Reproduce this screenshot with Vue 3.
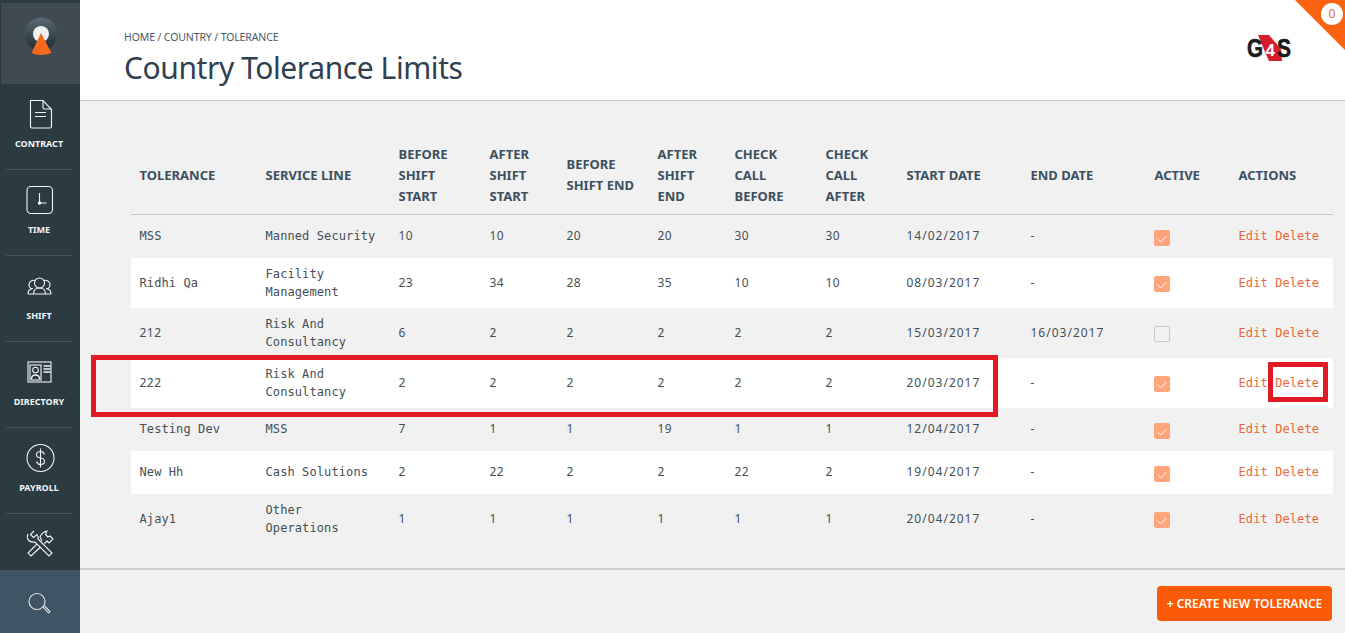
<template>
  <div class="page">
    <aside class="sidebar">
      <div class="logo-tile">
        <svg width="36" height="40" viewBox="0 0 36 40">
          <defs>
            <linearGradient id="ball" x1="0" y1="0" x2="0" y2="1">
              <stop offset="0" stop-color="#5b6a73" />
              <stop offset="1" stop-color="#1d2b33" />
            </linearGradient>
          </defs>
          <circle cx="18" cy="17" r="16.500" fill="url(#ball)" />
          <circle cx="18" cy="17" r="8" fill="#eef0f1" />
          <path d="M18 16 L28.500 36 Q18 40 8.500 36 Z" fill="#f4691c" />
        </svg>
      </div>
      <a v-for="item in navItems" :key="item.label" class="nav-item">
        <svg width="32" height="32" viewBox="0 0 32 32" fill="none" stroke="#f2f4f5" stroke-width="1.1">
          <template v-if="item.icon === 'contract'">
            <path d="M6.500 2.500h12.500l8.500 9v17q0 1.500-1.500 1.500h-18q-1.500 0-1.500-1.500z" />
            <path d="M19 2.500v7q0 1.500 1.500 1.500h7M11 14.500h11M11 18.500h11" />
          </template>
          <template v-if="item.icon === 'time'">
            <rect x="3" y="2.500" width="25.500" height="27" rx="4" />
            <path d="M15.500 9v10h7" />
            <circle cx="15.500" cy="19" r="1.200" fill="#f2f4f5" />
          </template>
          <template v-if="item.icon === 'shift'">
            <circle cx="15.500" cy="13" r="5" />
            <path d="M11 10.500a4.500 4.500 0 1 0-3 8.500M20 10.500a4.500 4.500 0 1 1 3 8.500" />
            <path d="M4 24q0-5 5-5.500M27 24q0-5-5-5.500M9.500 24q0-6 6-6t6 6M4 24h23" />
          </template>
          <template v-if="item.icon === 'directory'">
            <rect x="4" y="6" width="23" height="20" />
            <rect x="6" y="9" width="11" height="15" />
            <circle cx="11.500" cy="14" r="2.800" />
            <path d="M7.500 23q0-4 4-4t4 4M19.500 10h7M19.500 13h7M19.500 16h7" stroke-width="1.3" />
          </template>
          <template v-if="item.icon === 'payroll'">
            <circle cx="16.500" cy="16" r="13.500" />
            <path d="M20.500 12.500q-1-3-4-3-4 0-4 3t4 3.500 4 3.500-4 3q-3 0-4-3M16.500 6.500v19" />
          </template>
          <template v-if="item.icon === 'tools'">
            <path d="M10 3L6.500 6.500 9.500 9.500 13 6.500Q14.500 9 14 11L28 25 25 28 11 14Q5 15 3.500 10 3 8 4 6" />
            <path d="M13 16L4 25 7 28 16.500 19M18 13L16 9Q18 4 23 3 21 6 22 7L24 9 26 8 29 11 25 15 23 13 20.500 15.500" />
          </template>
        </svg>
        <span v-if="item.label" class="nav-label">{{ item.label }}</span>
      </a>
      <div class="search-tile">
        <svg width="24" height="24" viewBox="0 0 24 24" fill="none" stroke="#dfe5e8" stroke-width="1.100">
          <circle cx="9" cy="11.500" r="8" />
          <path d="M15 17l5.500 6 1.500-1.500-5.500-5.500" />
        </svg>
      </div>
    </aside>

    <main class="main">
      <header class="topbar">
        <div>
          <div class="crumbs">HOME / COUNTRY / TOLERANCE</div>
          <h1 class="title">Country Tolerance Limits</h1>
        </div>
        <div class="brand">
          <svg width="52" height="38" viewBox="0 -6 52 38">
            <path d="M13 0h11l12 14 1 12h-13l-4-9z" fill="#d71f2b" />
            <text x="2" y="22" class="brand-letter" textLength="16" lengthAdjust="spacingAndGlyphs">G</text>
            <text x="32" y="22" class="brand-letter" textLength="14" lengthAdjust="spacingAndGlyphs">S</text>
            <text x="20.500" y="21" class="brand-four">4</text>
          </svg>
        </div>
        <div class="ribbon"></div>
        <div class="badge">0</div>
      </header>

      <section class="content">
        <table class="grid">
          <colgroup>
            <col v-for="w in colWidths" :key="w.id" :style="{ width: w.size + 'px' }" />
          </colgroup>
          <thead>
            <tr>
              <th v-for="h in headings" :key="h.id">
                <span v-for="line in h.lines" :key="line" class="th-line">{{ line }}</span>
              </th>
            </tr>
          </thead>
          <tbody>
            <tr v-for="(row, i) in rows" :key="row.name" :class="{ white: i % 2 === 1, single: row.line.length < 15 }">
              <td :class="{ num: /^\d+$/.test(row.name) }">{{ row.name }}</td>
              <td><span class="wrap">{{ row.line }}</span></td>
              <td v-for="(n, j) in row.nums" :key="j" class="num">{{ n }}</td>
              <td class="date">{{ row.start }}</td>
              <td class="date">{{ row.end }}</td>
              <td>
                <span class="check" :class="{ on: row.active }">
                  <svg v-if="row.active" width="16" height="16" viewBox="0 0 16 16" fill="none" stroke="#fff" stroke-width="0.900">
                    <path d="M3.500 8.500l3 3.500 6-6" />
                  </svg>
                </span>
              </td>
              <td class="links"><a>Edit</a> <a>Delete</a></td>
            </tr>
          </tbody>
        </table>
        <div class="mark mark-row"></div>
        <div class="mark mark-delete"></div>
      </section>

      <footer class="footer">
        <button class="create">+ CREATE NEW TOLERANCE</button>
      </footer>
    </main>
  </div>
</template>

<script setup>
const navItems = [
  { icon: 'contract', label: 'CONTRACT' },
  { icon: 'time', label: 'TIME' },
  { icon: 'shift', label: 'SHIFT' },
  { icon: 'directory', label: 'DIRECTORY' },
  { icon: 'payroll', label: 'PAYROLL' },
  { icon: 'tools', label: '' },
]

const colWidths = [126, 133, 91, 77, 91, 77, 91, 81, 124, 124, 84, 103].map((size, id) => ({ id, size }))

const headings = [
  ['TOLERANCE'],
  ['SERVICE LINE'],
  ['BEFORE', 'SHIFT', 'START'],
  ['AFTER', 'SHIFT', 'START'],
  ['BEFORE', 'SHIFT END'],
  ['AFTER', 'SHIFT', 'END'],
  ['CHECK', 'CALL', 'BEFORE'],
  ['CHECK', 'CALL', 'AFTER'],
  ['START DATE'],
  ['END DATE'],
  ['ACTIVE'],
  ['ACTIONS'],
].map((lines, id) => ({ id, lines }))

const rows = [
  { name: 'MSS', line: 'Manned Security', nums: [10, 10, 20, 20, 30, 30], start: '14/02/2017', end: '-', active: true },
  { name: 'Ridhi Qa', line: 'Facility Management', nums: [23, 34, 28, 35, 10, 10], start: '08/03/2017', end: '-', active: true },
  { name: '212', line: 'Risk And Consultancy', nums: [6, 2, 2, 2, 2, 2], start: '15/03/2017', end: '16/03/2017', active: false },
  { name: '222', line: 'Risk And Consultancy', nums: [2, 2, 2, 2, 2, 2], start: '20/03/2017', end: '-', active: true },
  { name: 'Testing Dev', line: 'MSS', nums: [7, 1, 1, 19, 1, 1], start: '12/04/2017', end: '-', active: true },
  { name: 'New Hh', line: 'Cash Solutions', nums: [2, 22, 2, 2, 22, 2], start: '19/04/2017', end: '-', active: true },
  { name: 'Ajay1', line: 'Other Operations', nums: [1, 1, 1, 1, 1, 1], start: '20/04/2017', end: '-', active: true },
]
</script>

<style>
html,
body {
  margin: 0;
  height: 100%;
  overflow: hidden;
}
</style>

<style scoped>
.page {
  display: flex;
  height: 633px;
  font-family: "Noto Sans", sans-serif;
  background: #f1f1f1;
}
.sidebar {
  width: 80px;
  flex: none;
  display: flex;
  flex-direction: column;
  background: #2c3a42;
}
.logo-tile {
  height: 81px;
  flex: none;
  margin: 3px 0 0 1px;
  display: flex;
  align-items: flex-start;
  justify-content: center;
  box-sizing: border-box;
  padding-top: 14px;
  background: #3f4a52;
}
.nav-item {
  height: 86px;
  margin: 0 8px 0 6px;
  display: flex;
  flex-direction: column;
  align-items: center;
  padding-top: 14px;
  box-sizing: border-box;
  border-bottom: 1px solid #46535b;
  flex: none;
}
.nav-item svg {
  margin-left: 2px;
}
.nav-item:last-of-type {
  height: 56px;
  border-bottom: 0;
}
.nav-label {
  margin-top: 8px;
  font-size: 9px;
  line-height: 12px;
  font-weight: 700;
  color: #f2f4f5;
}
.search-tile {
  flex: 1;
  display: flex;
  align-items: center;
  justify-content: center;
  background: #3e5566;
}
.main {
  flex: 1;
  min-width: 0;
  display: flex;
  flex-direction: column;
}
.topbar {
  height: 101px;
  flex: none;
  position: relative;
  display: flex;
  justify-content: space-between;
  box-sizing: border-box;
  padding: 29px 48px 0 44px;
  background: #fff;
  border-bottom: 1px solid #c4c4c4;
}
.crumbs {
  margin-top: 1px;
  font-size: 10.500px;
  line-height: 14px;
  letter-spacing: -0.120px;
  color: #4b5a63;
}
.title {
  margin: 3px 0 0;
  font-size: 30px;
  line-height: 42px;
  letter-spacing: -0.420px;
  font-weight: 400;
  color: #2f4150;
}
.brand-letter {
  font-family: "Liberation Sans", sans-serif;
  font-size: 26px;
  font-weight: 700;
  fill: #1b1b1b;
  stroke: #1b1b1b;
  stroke-width: 0.600px;
}
.brand-four {
  font-family: "Liberation Sans", sans-serif;
  font-size: 17px;
  font-weight: 700;
  fill: #fff;
}
.ribbon {
  position: absolute;
  top: 0;
  right: 0;
  width: 50px;
  height: 50px;
  background: #fb6210;
  clip-path: polygon(0 0, 100% 0, 100% 100%);
}
.badge {
  position: absolute;
  top: 3px;
  right: 2px;
  width: 22px;
  height: 22px;
  border-radius: 50%;
  background: #fff;
  color: #e9683c;
  font-size: 12px;
  line-height: 22px;
  text-align: center;
}
.content {
  flex: 1;
  position: relative;
  padding: 32px 12px 0 51px;
  border-bottom: 2px solid #cfcfcf;
  box-sizing: border-box;
}
.grid {
  width: 1202px;
  border-collapse: collapse;
  table-layout: fixed;
}
th {
  height: 81px;
  padding: 4px 8.500px 0;
  box-sizing: border-box;
  text-align: left;
  vertical-align: middle;
  font-size: 13px;
  line-height: 21px;
  font-weight: 700;
  color: #3d5060;
  border-bottom: 1px solid #c8c8c8;
}
.th-line {
  display: block;
  white-space: nowrap;
}
td {
  height: 43px;
  padding: 7px 8.500px;
  box-sizing: border-box;
  font-family: "DejaVu Sans Mono", monospace;
  font-size: 12px;
  line-height: 18px;
  letter-spacing: 0.100px;
  color: #454f55;
  vertical-align: middle;
}
tbody tr:first-child td {
  height: 44px;
}
tr.single td {
  padding-bottom: 9px;
}
td.num {
  font-family: "Noto Sans", sans-serif;
  letter-spacing: 0.500px;
}
td.date {
  font-family: "Noto Sans", sans-serif;
  letter-spacing: 1px;
}
tr.white td {
  background: #fff;
}
.wrap {
  display: block;
  max-width: 112px;
}
.check {
  display: block;
  width: 16px;
  height: 16px;
  margin: 1px 0 0 -0.500px;
  box-sizing: border-box;
  border: 1px solid #c9c9c9;
  border-radius: 2px;
}
tbody tr:first-child .check {
  margin-top: 3px;
}
tr.single .check {
  margin-top: 5px;
}
.check.on {
  background: #ffa47b;
  border-color: #ffa47b;
}
.check svg {
  display: block;
  margin: -1px;
}
.links {
  white-space: nowrap;
  color: #e9683c;
}
.mark {
  position: absolute;
  box-sizing: border-box;
  border: 5px solid #e21a26;
}
.mark-row {
  left: 11px;
  top: 254px;
  width: 907px;
  height: 62px;
}
.mark-delete {
  left: 1188px;
  top: 261px;
  width: 60px;
  height: 40px;
}
.footer {
  height: 63px;
  flex: none;
  display: flex;
  justify-content: flex-end;
  align-items: flex-start;
  padding: 16px 13px 0 0;
  box-sizing: border-box;
}
.create {
  width: 175px;
  height: 35px;
  padding: 0;
  border: 0;
  border-radius: 4px;
  background: #fb5a06;
  color: #fff;
  font-family: "Noto Sans", sans-serif;
  font-size: 12px;
  font-weight: 600;
}
</style>
